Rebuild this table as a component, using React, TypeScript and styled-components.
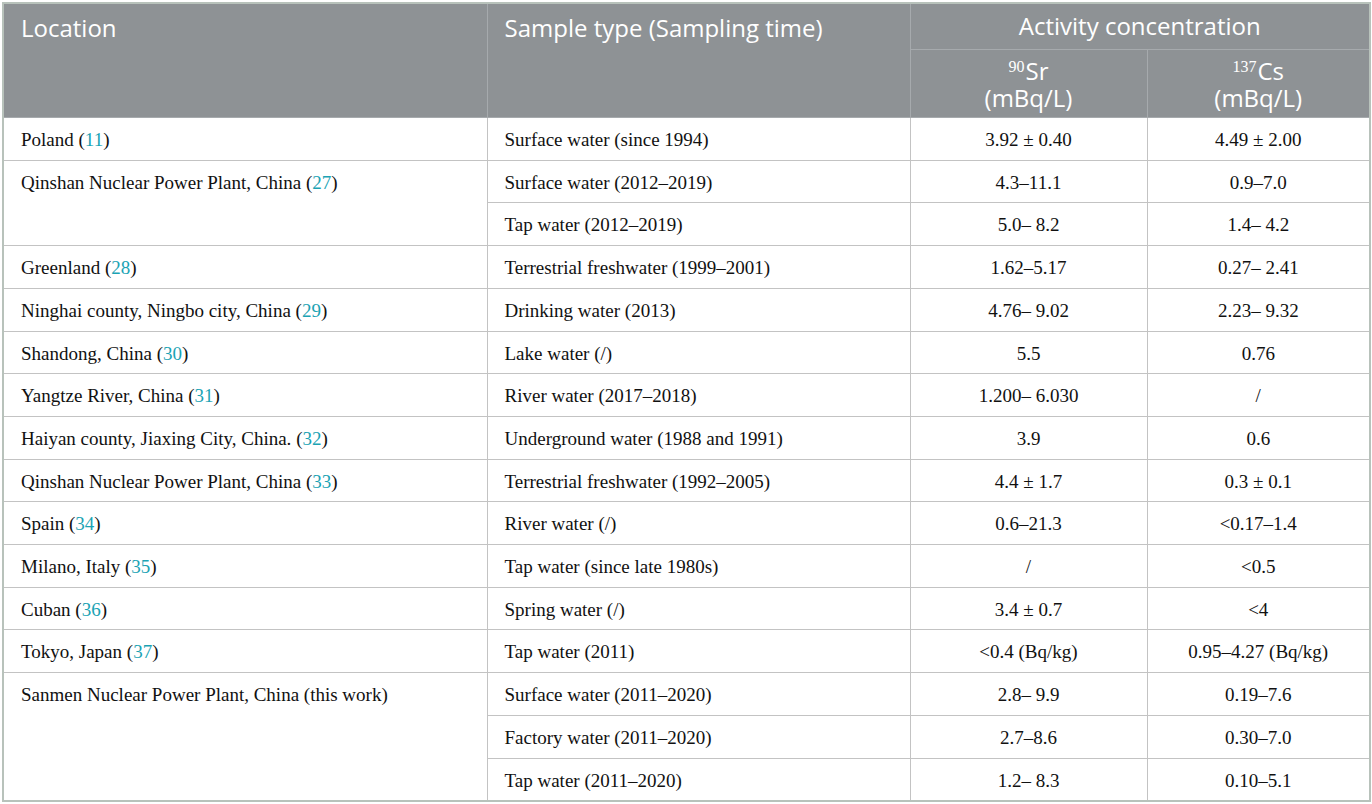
import React from "react";
import styled, { createGlobalStyle } from "styled-components";

const Global = createGlobalStyle`
  html, body { margin: 0; padding: 0; background: #ffffff; }
`;

const Page = styled.div`
  padding: 2px 3px 0 2px;
`;

const Table = styled.table`
  width: 1367px;
  table-layout: fixed;
  border-collapse: collapse;
  border: 2px solid #b8c2bb;
`;

const HeadCell = styled.th<{ $center?: boolean; $padTop: number; $padBottom: number }>`
  background: #8e9295;
  color: #ffffff;
  font-family: "Open Sans", "Liberation Sans", sans-serif;
  font-weight: 400;
  font-size: 24px;
  line-height: 27px;
  text-align: ${(p) => (p.$center ? "center" : "left")};
  vertical-align: top;
  padding: ${(p) => p.$padTop}px ${(p) => (p.$center ? "8px" : "17px")} ${(p) => p.$padBottom}px;
  border: 1px solid #a6aaad;
  white-space: nowrap;
`;

const HeadLine = styled.span`
  display: block;
  height: 27px;
`;

const Cell = styled.td<{ $center?: boolean }>`
  font-family: "Liberation Serif", "Times New Roman", serif;
  font-size: 19px;
  line-height: 21.7px;
  color: #111111;
  text-align: ${(p) => (p.$center ? "center" : "left")};
  vertical-align: top;
  padding: 11px ${(p) => (p.$center ? "8px" : "17px")} 9px;
  border: 1px solid #c3c3c3;
  white-space: nowrap;
`;

const Ref = styled.span`
  color: #1ba3b4;
`;

const Sup = styled.span`
  font-family: "Liberation Serif", "Times New Roman", serif;
  font-size: 16px;
  line-height: 1;
  position: relative;
  top: -8px;
  margin-right: 1px;
`;

type Row = {
  loc?: string;
  refNo?: string;
  span?: number;
  sample: string;
  sr: string;
  cs: string;
};

const rows: Row[] = [
  { loc: "Poland", refNo: "11", sample: "Surface water (since 1994)", sr: "3.92 ± 0.40", cs: "4.49 ± 2.00" },
  { loc: "Qinshan Nuclear Power Plant, China", refNo: "27", span: 2, sample: "Surface water (2012–2019)", sr: "4.3–11.1", cs: "0.9–7.0" },
  { sample: "Tap water (2012–2019)", sr: "5.0– 8.2", cs: "1.4– 4.2" },
  { loc: "Greenland", refNo: "28", sample: "Terrestrial freshwater (1999–2001)", sr: "1.62–5.17", cs: "0.27– 2.41" },
  { loc: "Ninghai county, Ningbo city, China", refNo: "29", sample: "Drinking water (2013)", sr: "4.76– 9.02", cs: "2.23– 9.32" },
  { loc: "Shandong, China", refNo: "30", sample: "Lake water (/)", sr: "5.5", cs: "0.76" },
  { loc: "Yangtze River, China", refNo: "31", sample: "River water (2017–2018)", sr: "1.200– 6.030", cs: "/" },
  { loc: "Haiyan county, Jiaxing City, China.", refNo: "32", sample: "Underground water (1988 and 1991)", sr: "3.9", cs: "0.6" },
  { loc: "Qinshan Nuclear Power Plant, China", refNo: "33", sample: "Terrestrial freshwater (1992–2005)", sr: "4.4 ± 1.7", cs: "0.3 ± 0.1" },
  { loc: "Spain", refNo: "34", sample: "River water (/)", sr: "0.6–21.3", cs: "<0.17–1.4" },
  { loc: "Milano, Italy", refNo: "35", sample: "Tap water (since late 1980s)", sr: "/", cs: "<0.5" },
  { loc: "Cuban", refNo: "36", sample: "Spring water (/)", sr: "3.4 ± 0.7", cs: "<4" },
  { loc: "Tokyo, Japan", refNo: "37", sample: "Tap water (2011)", sr: "<0.4 (Bq/kg)", cs: "0.95–4.27 (Bq/kg)" },
  { loc: "Sanmen Nuclear Power Plant, China (this work)", span: 3, sample: "Surface water (2011–2020)", sr: "2.8– 9.9", cs: "0.19–7.6" },
  { sample: "Factory water (2011–2020)", sr: "2.7–8.6", cs: "0.30–7.0" },
  { sample: "Tap water (2011–2020)", sr: "1.2– 8.3", cs: "0.10–5.1" },
];

export default function App() {
  return (
    <Page>
      <Global />
      <Table>
        <colgroup>
          <col style={{ width: 484 }} />
          <col style={{ width: 423 }} />
          <col style={{ width: 237 }} />
          <col style={{ width: 223 }} />
        </colgroup>
        <thead>
          <tr>
            <HeadCell rowSpan={2} $padTop={10} $padBottom={10}>
              Location
            </HeadCell>
            <HeadCell rowSpan={2} $padTop={10} $padBottom={10}>
              Sample type (Sampling time)
            </HeadCell>
            <HeadCell colSpan={2} $center $padTop={8} $padBottom={10}>
              Activity concentration
            </HeadCell>
          </tr>
          <tr>
            <HeadCell $center $padTop={7} $padBottom={6}>
              <HeadLine>
                <Sup>90</Sup>Sr
              </HeadLine>
              <HeadLine>(mBq/L)</HeadLine>
            </HeadCell>
            <HeadCell $center $padTop={7} $padBottom={6}>
              <HeadLine>
                <Sup>137</Sup>Cs
              </HeadLine>
              <HeadLine>(mBq/L)</HeadLine>
            </HeadCell>
          </tr>
        </thead>
        <tbody>
          {rows.map((r, i) => (
            <tr key={i}>
              {r.loc !== undefined && (
                <Cell rowSpan={r.span ?? 1}>
                  {r.loc}
                  {r.refNo && (
                    <>
                      {" ("}
                      <Ref>{r.refNo}</Ref>
                      {")"}
                    </>
                  )}
                </Cell>
              )}
              <Cell>{r.sample}</Cell>
              <Cell $center>{r.sr}</Cell>
              <Cell $center>{r.cs}</Cell>
            </tr>
          ))}
        </tbody>
      </Table>
    </Page>
  );
}
